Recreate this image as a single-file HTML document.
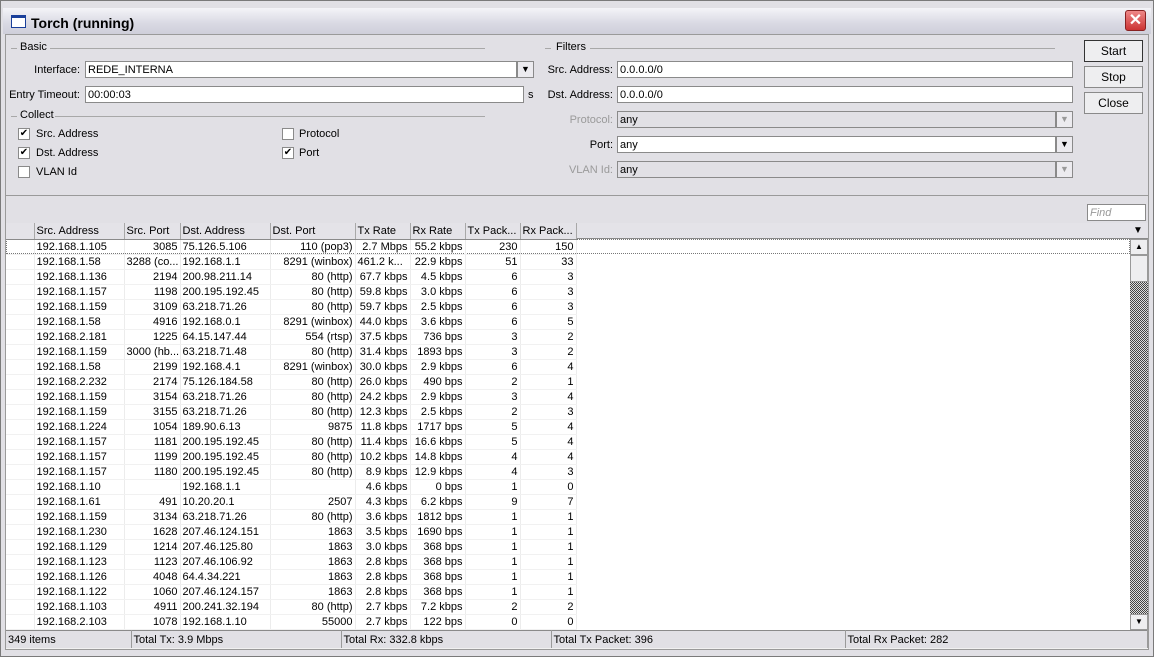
<!DOCTYPE html>
<html><head><meta charset="utf-8"><style>
*{margin:0;padding:0;box-sizing:border-box}
body{width:1154px;height:657px;background:#d8d7dc;font-family:"Liberation Sans",sans-serif;font-size:11px;color:#000;position:relative;overflow:hidden}
.a{position:absolute}
.frame{left:0;top:0;width:1154px;height:657px;border:1px solid #7a7a7a;background:#e1e0e5}
.title{left:3px;top:8px;width:1148px;height:26px;background:linear-gradient(#f4f4f8,#d9d9e3 60%,#cfcfda)}
.title span{position:absolute;left:28px;top:7px;font-size:14px;font-weight:bold}
.ico{left:8px;top:7px;width:15px;height:13px;border:1px solid #1a3f9a;border-top:3px solid #1a3f9a;background:#fff}
.xbtn{left:1125px;top:10px;width:21px;height:21px;background:linear-gradient(#e88,#c33);border:1px solid #822;border-radius:3px;color:#fff;font-size:16px;font-weight:bold;text-align:center;line-height:19px}
.body{left:5px;top:34px;width:1144px;height:616px;background:#e1e0e5;border:1px solid #9a9a9a}
.lbl{text-align:right}
.inp{background:#fff;border:1px solid #8a8a8a;height:17px;padding:1px 2px;line-height:14px}
.dis{background:#e1e0e5}
.dd{width:17px;height:17px;border:1px solid #8a8a8a;background:#ecebef;font-size:9px;text-align:center;line-height:15px}
.hl{height:1px;background:#a8a8a8}
.cb{width:12px;height:12px;border:1px solid #8a8a8a;background:#fff;font-size:10px;line-height:10px;text-align:center}
.btn{width:59px;height:22px;border:1px solid #8a8a8a;background:#eeeef0;text-align:center;line-height:20px;font-size:12px}
.g{color:#9a9a9a}
table{border-collapse:collapse;font-size:11px;table-layout:fixed}
td{height:15px;padding:0 2px;white-space:nowrap;overflow:hidden;border-right:1px solid #ececec;border-bottom:1px solid #f1f1f1;line-height:14px}
td.r{text-align:right}
.hd td{background:#e4e3e8;border-right:1px solid #a8a8a8;border-bottom:1px solid #8a8a8a;height:16px}
.sb td{border-right:1px solid #9a9a9a;background:#e1e0e5;height:18px}
</style></head><body>
<div class="a frame"></div>
<div class="a title"><div class="a ico"></div><span>Torch (running)</span></div>
<div class="a xbtn">✕</div>
<div class="a body"></div>

<div class="a hl" style="left:11px;top:48px;width:6px"></div>
<div class="a" style="left:20px;top:41px">Basic</div>
<div class="a hl" style="left:50px;top:48px;width:435px"></div>
<div class="a lbl" style="left:10px;top:64px;width:70px">Interface:</div>
<div class="a inp" style="left:85px;top:61px;width:432px">REDE_INTERNA</div>
<div class="a dd" style="left:517px;top:61px">▼</div>
<div class="a lbl" style="left:8px;top:89px;width:72px">Entry Timeout:</div>
<div class="a inp" style="left:85px;top:86px;width:439px">00:00:03</div>
<div class="a" style="left:528px;top:89px">s</div>
<div class="a hl" style="left:11px;top:116px;width:6px"></div>
<div class="a" style="left:20px;top:109px">Collect</div>
<div class="a hl" style="left:55px;top:116px;width:430px"></div>
<div class="a cb" style="left:18px;top:128px">✔</div><div class="a" style="left:36px;top:128px">Src. Address</div>
<div class="a cb" style="left:18px;top:147px">✔</div><div class="a" style="left:36px;top:147px">Dst. Address</div>
<div class="a cb" style="left:18px;top:166px"></div><div class="a" style="left:36px;top:166px">VLAN Id</div>
<div class="a cb" style="left:282px;top:128px"></div><div class="a" style="left:299px;top:128px">Protocol</div>
<div class="a cb" style="left:282px;top:147px">✔</div><div class="a" style="left:299px;top:147px">Port</div>

<div class="a hl" style="left:545px;top:48px;width:6px"></div>
<div class="a" style="left:556px;top:41px">Filters</div>
<div class="a hl" style="left:590px;top:48px;width:465px"></div>
<div class="a lbl" style="left:540px;top:64px;width:73px">Src. Address:</div>
<div class="a inp" style="left:617px;top:61px;width:456px">0.0.0.0/0</div>
<div class="a lbl" style="left:540px;top:89px;width:73px">Dst. Address:</div>
<div class="a inp" style="left:617px;top:86px;width:456px">0.0.0.0/0</div>
<div class="a lbl g" style="left:540px;top:114px;width:73px">Protocol:</div>
<div class="a inp dis" style="left:617px;top:111px;width:439px">any</div>
<div class="a dd g" style="left:1056px;top:111px">▼</div>
<div class="a lbl" style="left:540px;top:139px;width:73px">Port:</div>
<div class="a inp" style="left:617px;top:136px;width:439px">any</div>
<div class="a dd" style="left:1056px;top:136px">▼</div>
<div class="a lbl g" style="left:540px;top:164px;width:73px">VLAN Id:</div>
<div class="a inp dis" style="left:617px;top:161px;width:439px">any</div>
<div class="a dd g" style="left:1056px;top:161px">▼</div>

<div class="a btn" style="left:1084px;top:40px;border:1px solid #333">Start</div>
<div class="a btn" style="left:1084px;top:66px">Stop</div>
<div class="a btn" style="left:1084px;top:92px">Close</div>

<div class="a hl" style="left:6px;top:195px;width:1142px;background:#9a9a9a"></div>
<div class="a inp" style="left:1087px;top:204px;width:59px;color:#999;font-style:italic">Find</div>

<div class="a" style="left:6px;top:223px;width:1124px;height:407px;background:#fff"></div>
<div class="a" style="left:6px;top:223px;width:1142px;height:16px;background:#e4e3e8;border-bottom:1px solid #8a8a8a"></div>
<div class="a" style="left:1133px;top:225px;font-size:10px">▼</div>
<div class="a" style="left:1130px;top:239px;width:18px;height:391px;background:repeating-conic-gradient(#444 0 25%,#ddd 0 50%) 0 0/2px 2px"></div>
<div class="a" style="left:1130px;top:239px;width:18px;height:16px;background:#eeeef0;border:1px solid #999;font-size:8px;text-align:center;line-height:14px">▲</div>
<div class="a" style="left:1130px;top:255px;width:18px;height:27px;background:#eeeef0;border:1px solid #999"></div>
<div class="a" style="left:1130px;top:614px;width:18px;height:16px;background:#eeeef0;border:1px solid #999;font-size:8px;text-align:center;line-height:14px">▼</div>
<div class="a" style="left:6px;top:239px;width:1124px;height:15px;border:1px dotted #777"></div>

<table class="a" style="left:6px;top:223px;width:570px">
<colgroup><col style="width:28px"><col style="width:90px"><col style="width:56px"><col style="width:90px"><col style="width:85px"><col style="width:55px"><col style="width:55px"><col style="width:55px"><col style="width:56px"></colgroup>
<tr class="hd"><td></td><td>Src. Address</td><td>Src. Port</td><td>Dst. Address</td><td>Dst. Port</td><td>Tx Rate</td><td>Rx Rate</td><td>Tx Pack...</td><td>Rx Pack...</td></tr>
<tr><td></td><td>192.168.1.105</td><td class="r">3085</td><td>75.126.5.106</td><td class="r">110 (pop3)</td><td class="r">2.7 Mbps</td><td class="r">55.2 kbps</td><td class="r">230</td><td class="r">150</td></tr>
<tr><td></td><td>192.168.1.58</td><td>3288 (co...</td><td>192.168.1.1</td><td class="r">8291 (winbox)</td><td>461.2 k...</td><td class="r">22.9 kbps</td><td class="r">51</td><td class="r">33</td></tr>
<tr><td></td><td>192.168.1.136</td><td class="r">2194</td><td>200.98.211.14</td><td class="r">80 (http)</td><td class="r">67.7 kbps</td><td class="r">4.5 kbps</td><td class="r">6</td><td class="r">3</td></tr>
<tr><td></td><td>192.168.1.157</td><td class="r">1198</td><td>200.195.192.45</td><td class="r">80 (http)</td><td class="r">59.8 kbps</td><td class="r">3.0 kbps</td><td class="r">6</td><td class="r">3</td></tr>
<tr><td></td><td>192.168.1.159</td><td class="r">3109</td><td>63.218.71.26</td><td class="r">80 (http)</td><td class="r">59.7 kbps</td><td class="r">2.5 kbps</td><td class="r">6</td><td class="r">3</td></tr>
<tr><td></td><td>192.168.1.58</td><td class="r">4916</td><td>192.168.0.1</td><td class="r">8291 (winbox)</td><td class="r">44.0 kbps</td><td class="r">3.6 kbps</td><td class="r">6</td><td class="r">5</td></tr>
<tr><td></td><td>192.168.2.181</td><td class="r">1225</td><td>64.15.147.44</td><td class="r">554 (rtsp)</td><td class="r">37.5 kbps</td><td class="r">736 bps</td><td class="r">3</td><td class="r">2</td></tr>
<tr><td></td><td>192.168.1.159</td><td>3000 (hb...</td><td>63.218.71.48</td><td class="r">80 (http)</td><td class="r">31.4 kbps</td><td class="r">1893 bps</td><td class="r">3</td><td class="r">2</td></tr>
<tr><td></td><td>192.168.1.58</td><td class="r">2199</td><td>192.168.4.1</td><td class="r">8291 (winbox)</td><td class="r">30.0 kbps</td><td class="r">2.9 kbps</td><td class="r">6</td><td class="r">4</td></tr>
<tr><td></td><td>192.168.2.232</td><td class="r">2174</td><td>75.126.184.58</td><td class="r">80 (http)</td><td class="r">26.0 kbps</td><td class="r">490 bps</td><td class="r">2</td><td class="r">1</td></tr>
<tr><td></td><td>192.168.1.159</td><td class="r">3154</td><td>63.218.71.26</td><td class="r">80 (http)</td><td class="r">24.2 kbps</td><td class="r">2.9 kbps</td><td class="r">3</td><td class="r">4</td></tr>
<tr><td></td><td>192.168.1.159</td><td class="r">3155</td><td>63.218.71.26</td><td class="r">80 (http)</td><td class="r">12.3 kbps</td><td class="r">2.5 kbps</td><td class="r">2</td><td class="r">3</td></tr>
<tr><td></td><td>192.168.1.224</td><td class="r">1054</td><td>189.90.6.13</td><td class="r">9875</td><td class="r">11.8 kbps</td><td class="r">1717 bps</td><td class="r">5</td><td class="r">4</td></tr>
<tr><td></td><td>192.168.1.157</td><td class="r">1181</td><td>200.195.192.45</td><td class="r">80 (http)</td><td class="r">11.4 kbps</td><td class="r">16.6 kbps</td><td class="r">5</td><td class="r">4</td></tr>
<tr><td></td><td>192.168.1.157</td><td class="r">1199</td><td>200.195.192.45</td><td class="r">80 (http)</td><td class="r">10.2 kbps</td><td class="r">14.8 kbps</td><td class="r">4</td><td class="r">4</td></tr>
<tr><td></td><td>192.168.1.157</td><td class="r">1180</td><td>200.195.192.45</td><td class="r">80 (http)</td><td class="r">8.9 kbps</td><td class="r">12.9 kbps</td><td class="r">4</td><td class="r">3</td></tr>
<tr><td></td><td>192.168.1.10</td><td class="r"></td><td>192.168.1.1</td><td class="r"></td><td class="r">4.6 kbps</td><td class="r">0 bps</td><td class="r">1</td><td class="r">0</td></tr>
<tr><td></td><td>192.168.1.61</td><td class="r">491</td><td>10.20.20.1</td><td class="r">2507</td><td class="r">4.3 kbps</td><td class="r">6.2 kbps</td><td class="r">9</td><td class="r">7</td></tr>
<tr><td></td><td>192.168.1.159</td><td class="r">3134</td><td>63.218.71.26</td><td class="r">80 (http)</td><td class="r">3.6 kbps</td><td class="r">1812 bps</td><td class="r">1</td><td class="r">1</td></tr>
<tr><td></td><td>192.168.1.230</td><td class="r">1628</td><td>207.46.124.151</td><td class="r">1863</td><td class="r">3.5 kbps</td><td class="r">1690 bps</td><td class="r">1</td><td class="r">1</td></tr>
<tr><td></td><td>192.168.1.129</td><td class="r">1214</td><td>207.46.125.80</td><td class="r">1863</td><td class="r">3.0 kbps</td><td class="r">368 bps</td><td class="r">1</td><td class="r">1</td></tr>
<tr><td></td><td>192.168.1.123</td><td class="r">1123</td><td>207.46.106.92</td><td class="r">1863</td><td class="r">2.8 kbps</td><td class="r">368 bps</td><td class="r">1</td><td class="r">1</td></tr>
<tr><td></td><td>192.168.1.126</td><td class="r">4048</td><td>64.4.34.221</td><td class="r">1863</td><td class="r">2.8 kbps</td><td class="r">368 bps</td><td class="r">1</td><td class="r">1</td></tr>
<tr><td></td><td>192.168.1.122</td><td class="r">1060</td><td>207.46.124.157</td><td class="r">1863</td><td class="r">2.8 kbps</td><td class="r">368 bps</td><td class="r">1</td><td class="r">1</td></tr>
<tr><td></td><td>192.168.1.103</td><td class="r">4911</td><td>200.241.32.194</td><td class="r">80 (http)</td><td class="r">2.7 kbps</td><td class="r">7.2 kbps</td><td class="r">2</td><td class="r">2</td></tr>
<tr><td></td><td>192.168.2.103</td><td class="r">1078</td><td>192.168.1.10</td><td class="r">55000</td><td class="r">2.7 kbps</td><td class="r">122 bps</td><td class="r">0</td><td class="r">0</td></tr>
</table>

<table class="a" style="left:6px;top:630px;width:1142px;border-top:1px solid #8a8a8a">
<colgroup><col style="width:125px"><col style="width:210px"><col style="width:210px"><col style="width:294px"><col></colgroup>
<tr class="sb"><td>349 items</td><td>Total Tx: 3.9 Mbps</td><td>Total Rx: 332.8 kbps</td><td>Total Tx Packet: 396</td><td>Total Rx Packet: 282</td></tr>
</table>
</body></html>
